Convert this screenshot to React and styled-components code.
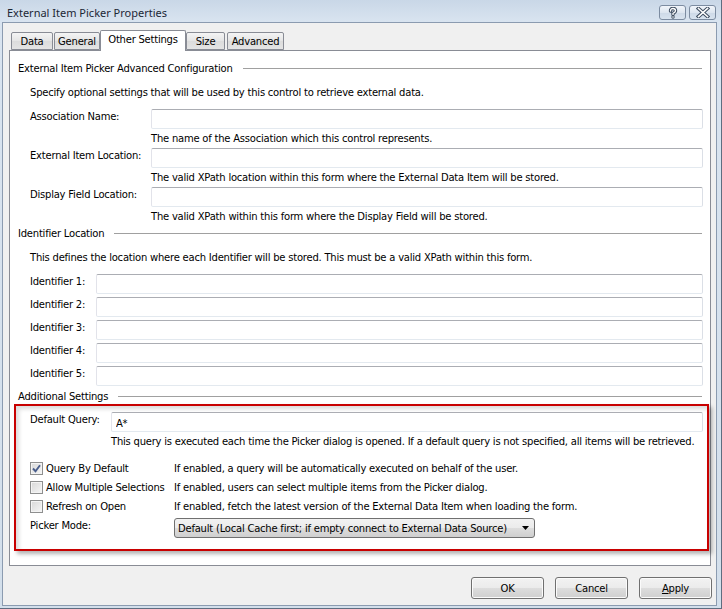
import React from "react";
import styled, { createGlobalStyle } from "styled-components";

const GlobalStyle = createGlobalStyle`
  html, body {
    margin: 0;
    padding: 0;
    background: #ffffff;
  }
  body {
    font-family: "DejaVu Sans", Verdana, sans-serif;
    font-size: 10px;
    letter-spacing: -0.22px;
    color: #000;
  }
  * {
    box-sizing: border-box;
  }
`;

const identifiers = [1, 2, 3, 4, 5];

const options = [
  {
    label: "Query By Default",
    checked: true,
    text: "If enabled, a query will be automatically executed on behalf of the user.",
  },
  {
    label: "Allow Multiple Selections",
    checked: false,
    text: "If enabled, users can select multiple items from the Picker dialog.",
  },
  {
    label: "Refresh on Open",
    checked: false,
    text: "If enabled, fetch the latest version of the External Data Item when loading the form.",
  },
];

function HelpIcon() {
  return (
    <svg width="12" height="12" viewBox="0 0 12 12">
      <g fill="none" strokeLinecap="round" strokeLinejoin="round">
        <path d="M3.5 4 Q3.5 1.5 6 1.5 Q8.5 1.5 8.5 3.8 Q8.5 5.3 6 6.3 L6 7.4" stroke="#3c4b5e" strokeWidth="3.4" />
        <path d="M3.5 4 Q3.5 1.5 6 1.5 Q8.5 1.5 8.5 3.8 Q8.5 5.3 6 6.3 L6 7.4" stroke="#fff" strokeWidth="1.4" />
      </g>
      <circle cx="6" cy="10" r="1.7" fill="#3c4b5e" />
      <circle cx="6" cy="10" r="0.8" fill="#fff" />
    </svg>
  );
}

function CloseIcon() {
  return (
    <svg width="14" height="11" viewBox="0 0 14 11">
      <g strokeLinecap="square">
        <path d="M2.5 1.5 L11.5 9.5 M11.5 1.5 L2.5 9.5" stroke="#3c4b5e" strokeWidth="3.6" />
        <path d="M2.5 1.5 L11.5 9.5 M11.5 1.5 L2.5 9.5" stroke="#fff" strokeWidth="1.6" />
      </g>
    </svg>
  );
}

function CheckMark() {
  return (
    <svg width="9" height="9" viewBox="0 0 9 9">
      <path d="M1 4.5 L3.5 7.2 L8 1.2" fill="none" stroke="#4a5e8c" strokeWidth="1.9" />
    </svg>
  );
}

function Field({ label, labelWidth, mt, value }) {
  return (
    <FieldRow $mt={mt}>
      <Label $w={labelWidth}>{label}</Label>
      <TextBox defaultValue={value} />
    </FieldRow>
  );
}

export default function App() {
  return (
    <>
      <GlobalStyle />
      <Window>
        <TitleBar>
          <Title>External Item Picker Properties</Title>
          <CaptionButtons>
            <CaptionButton>
              <HelpIcon />
            </CaptionButton>
            <CaptionButton>
              <CloseIcon />
            </CaptionButton>
          </CaptionButtons>
        </TitleBar>

        <Content>
          <TabStrip>
            <Tab $w={42} $mr={1}>Data</Tab>
            <Tab $w={46}>General</Tab>
            <Tab $w={86} $active>Other Settings</Tab>
            <Tab $w={39}>Size</Tab>
            <Tab $w={57} $ml={2}>Advanced</Tab>
          </TabStrip>

          <Panel>
            <Header>External Item Picker Advanced Configuration</Header>
            <Desc>Specify optional settings that will be used by this control to retrieve external data.</Desc>

            <Field label="Association Name:" labelWidth={121} mt={10} />
            <Help $indent={121}>The name of the Association which this control represents.</Help>
            <Field label="External Item Location:" labelWidth={121} mt={3} />
            <Help $indent={121}>The valid XPath location within this form where the External Data Item will be stored.</Help>
            <Field label="Display Field Location:" labelWidth={121} mt={3} />
            <Help $indent={121}>The valid XPath within this form where the Display Field will be stored.</Help>

            <Header $mt={4}>Identifier Location</Header>
            <Desc>This defines the location where each Identifier will be stored. This must be a valid XPath within this form.</Desc>
            {identifiers.map((n, i) => (
              <Field key={n} label={`Identifier ${n}:`} labelWidth={66} mt={i === 0 ? 10 : 3} />
            ))}

            <Header $mt={4}>Additional Settings</Header>
            <Highlight>
              <InnerRow>
                <Label $w={81}>Default Query:</Label>
                <TextBox defaultValue="A*" />
              </InnerRow>
              <Help $indent={81} $flush>
                This query is executed each time the Picker dialog is opened. If a default query is not specified, all items will be retrieved.
              </Help>

              <Options>
                {options.map((o) => (
                  <OptionRow key={o.label}>
                    <CheckLabel>
                      <CheckBox>{o.checked && <CheckMark />}</CheckBox>
                      {o.label}
                    </CheckLabel>
                    <span>{o.text}</span>
                  </OptionRow>
                ))}
              </Options>

              <InnerRow $mt={2}>
                <Label $w={144}>Picker Mode:</Label>
                <Select>
                  Default (Local Cache first; if empty connect to External Data Source)
                  <Arrow>
                    <svg width="7" height="4" viewBox="0 0 7 4">
                      <path d="M0 0 H7 L3.5 4 Z" fill="#000" />
                    </svg>
                  </Arrow>
                </Select>
              </InnerRow>
            </Highlight>
          </Panel>

          <Footer>
            <Button>OK</Button>
            <Button>Cancel</Button>
            <Button>
              <u>A</u>pply
            </Button>
          </Footer>
        </Content>
      </Window>
    </>
  );
}

const Window = styled.div`
  width: 722px;
  height: 609px;
  display: flex;
  flex-direction: column;
  padding: 0 4px 2px 2px;
  background: linear-gradient(#c9d7e7, #d9e4f0 22px, #d3dfeb);
  border-right: 1px solid #5e6d80;
  border-bottom: 1px solid #5e6d80;
`;

const TitleBar = styled.div`
  height: 22px;
  flex: none;
  display: flex;
  align-items: flex-start;
  padding: 0 1px 0 5px;
`;

const Title = styled.div`
  font-family: "Noto Sans", "Open Sans", sans-serif;
  font-size: 11px;
  letter-spacing: 0;
  line-height: 14px;
  margin-top: 6px;
  color: #1c2735;
`;

const CaptionButtons = styled.div`
  margin-left: auto;
  margin-top: 5px;
  display: flex;
  gap: 3px;
`;

const CaptionButton = styled.div`
  width: 27px;
  height: 15px;
  border: 1px solid #7c8ca1;
  border-radius: 3px;
  background: linear-gradient(#f1f5fa, #dde6f0 50%, #cdd9e7 51%, #d8e3ef);
  display: flex;
  align-items: center;
  justify-content: center;
`;

const Content = styled.div`
  flex: 1;
  display: flex;
  flex-direction: column;
  background: #f0f0f0;
  border: 1px solid #8b9bb0;
  padding: 7px 4px 6px 6px;
`;

const TabStrip = styled.div`
  height: 20px;
  display: flex;
  align-items: flex-end;
  padding-left: 2px;
  position: relative;
  z-index: 1;
`;

const Tab = styled.div`
  width: ${(p) => p.$w}px;
  height: ${(p) => (p.$active ? 21 : 18)}px;
  margin-left: ${(p) => p.$ml || 0}px;
  margin-right: ${(p) => p.$mr || 0}px;
  margin-bottom: ${(p) => (p.$active ? -1 : 0)}px;
  border: 1px solid #898c95;
  border-bottom: ${(p) => (p.$active ? "none" : "1px solid #898c95")};
  border-radius: 2px 2px 0 0;
  background: ${(p) => (p.$active ? "#ffffff" : "linear-gradient(#f4f4f4, #e5e5e5 50%, #dcdcdc 51%, #e4e4e4)")};
  display: flex;
  align-items: center;
  justify-content: center;
  padding-bottom: ${(p) => (p.$active ? 3 : 0)}px;
  white-space: nowrap;
`;

const Panel = styled.div`
  height: 516px;
  margin-right: 1px;
  background: #ffffff;
  border: 1px solid #898c95;
  padding-top: 11px;
  display: flex;
  flex-direction: column;
`;

const Header = styled.div`
  display: flex;
  align-items: center;
  height: 13px;
  line-height: 13px;
  margin-top: ${(p) => p.$mt || 0}px;
  padding: 0 8px;
  white-space: nowrap;

  &::after {
    content: "";
    flex: 1;
    height: 1px;
    margin-left: 10px;
    background: #a0a0a0;
  }
`;

const Desc = styled.div`
  line-height: 13px;
  margin-top: 11px;
  padding-left: 20px;
`;

const FieldRow = styled.div`
  display: flex;
  align-items: flex-start;
  margin-top: ${(p) => p.$mt}px;
  padding: 0 7px 0 20px;
`;

const InnerRow = styled.div`
  display: flex;
  align-items: flex-start;
  margin-top: ${(p) => p.$mt || 0}px;
`;

const Label = styled.div`
  width: ${(p) => p.$w}px;
  flex: none;
  padding-top: 1px;
  line-height: 13px;
  white-space: nowrap;
`;

const TextBox = styled.input`
  flex: 1;
  min-width: 0;
  height: 20px;
  border: 1px solid;
  border-color: #abadb3 #dbdfe6 #e3e9ef #e2e3ea;
  border-radius: 2px;
  background: #ffffff;
  padding: 2px 4px 0;
  font: inherit;
  letter-spacing: inherit;
  color: #000;
  outline: none;
`;

const Help = styled.div`
  line-height: 13px;
  margin-top: 3px;
  padding-left: ${(p) => (p.$flush ? p.$indent : p.$indent + 20)}px;
  white-space: nowrap;
`;

const Highlight = styled.div`
  margin: 1px 1px 0 4px;
  border: 2px solid #c80000;
  padding: 6px 4px 11px 14px;
  box-shadow: 3px 3px 4px rgba(0, 0, 0, 0.3), inset 3px 3px 4px rgba(0, 0, 0, 0.14);
`;

const Options = styled.div`
  margin-top: 11px;
  display: flex;
  flex-direction: column;
`;

const OptionRow = styled.div`
  height: 19px;
  display: flex;
  align-items: center;
  white-space: nowrap;
`;

const CheckLabel = styled.div`
  width: 144px;
  flex: none;
  display: flex;
  align-items: center;
  gap: 3px;
`;

const CheckBox = styled.span`
  width: 13px;
  height: 13px;
  flex: none;
  border: 1px solid #8e8f8f;
  background: linear-gradient(135deg, #d8d8d8, #f6f6f6);
  box-shadow: inset 0 0 0 1px #f4f4f4;
  display: flex;
  align-items: center;
  justify-content: center;
`;

const Select = styled.div`
  width: 361px;
  height: 20px;
  border: 1px solid #707070;
  border-radius: 3px;
  background: linear-gradient(#f2f2f2, #ebebeb 50%, #dddddd 51%, #cfcfcf);
  display: flex;
  align-items: center;
  padding-left: 3px;
  white-space: nowrap;
`;

const Arrow = styled.span`
  margin-left: auto;
  margin-right: 5px;
  display: flex;
`;

const Footer = styled.div`
  display: flex;
  justify-content: flex-end;
  gap: 11px;
  margin-top: 11px;
`;

const Button = styled.div`
  width: 73px;
  height: 22px;
  border: 1px solid #707070;
  border-radius: 3px;
  background: linear-gradient(#f2f2f2, #ebebeb 50%, #dddddd 51%, #cfcfcf);
  box-shadow: inset 0 0 0 1px #fbfbfb;
  display: flex;
  align-items: center;
  justify-content: center;
`;
